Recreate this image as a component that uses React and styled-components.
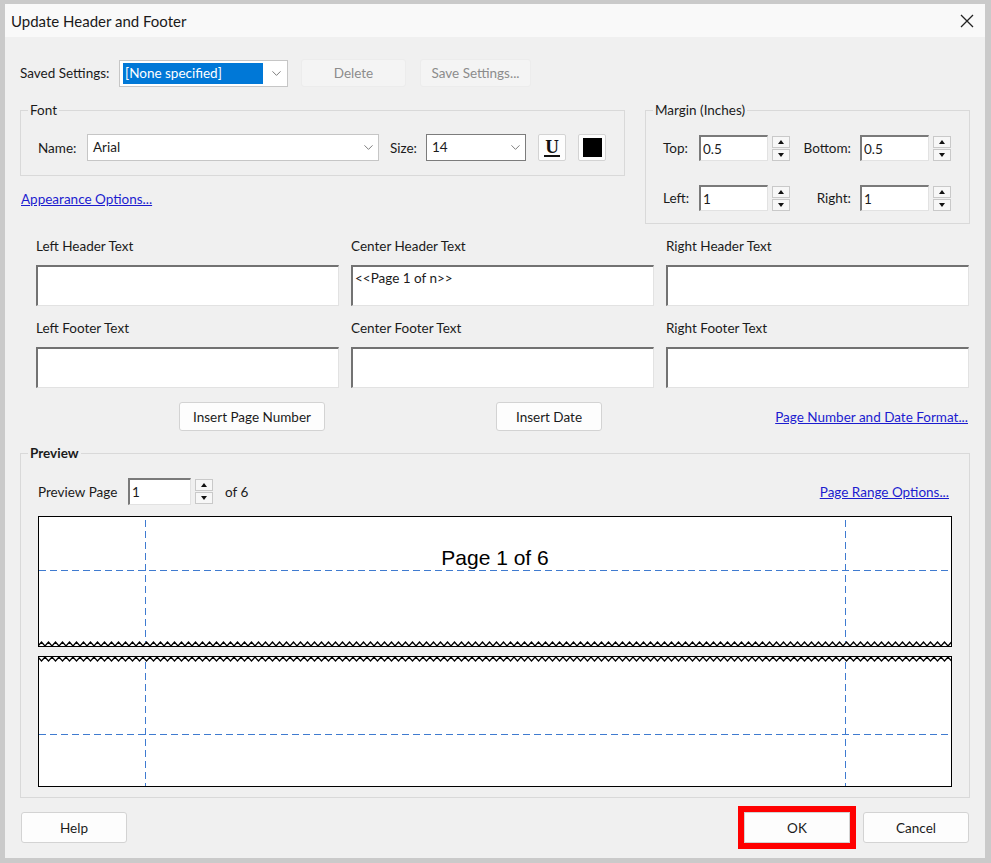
import React from "react";
import styled, { createGlobalStyle } from "styled-components";
import { ChevronDown } from "lucide-react";

const GlobalStyle = createGlobalStyle`
  html, body {
    margin: 0;
    padding: 0;
    background: #f0f0f0;
  }
  body {
    font-family: Lato, "Open Sans", sans-serif;
    font-size: 13.5px;
    color: #1b1b1b;
  }
  * {
    box-sizing: border-box;
  }
`;

const PAGE_W = 914;
const PAGE_H = 131;
const GUIDE = "#3f7bd0";

const zigzag = (base, tip) => {
  const pts = [];
  for (let x = 0; x <= PAGE_W; x += 7) {
    pts.push(`${x},${base}`);
    if (x + 3.5 <= PAGE_W) pts.push(`${x + 3.5},${tip}`);
  }
  return pts.join(" ");
};

const CloseIcon = () => (
  <svg width="14" height="14" viewBox="0 0 14 14">
    <path d="M1 1 L13 13 M13 1 L1 13" stroke="#222" strokeWidth="1.3" fill="none" />
  </svg>
);

const Spinner = () => (
  <SpinBox>
    <SpinButton>
      <Triangle $dir="up" />
    </SpinButton>
    <SpinButton>
      <Triangle $dir="down" />
    </SpinButton>
  </SpinBox>
);

const Dropdown = ({ width, value, highlight, focused, chevronRight }) => (
  <SelectBox $width={width} $focused={focused} $chevronRight={chevronRight}>
    <SelectValue $highlight={highlight}>{value}</SelectValue>
    <ChevronDown size={15} strokeWidth={1.4} color="#6a6a6a" />
  </SelectBox>
);

const MarginField = ({ label, labelWidth, lead, value }) => (
  <MarginCell $lead={lead}>
    <MarginLabel $width={labelWidth} $right={lead}>
      {label}
    </MarginLabel>
    <TextBox $width={69} $height={26} readOnly value={value} />
    <Spinner />
  </MarginCell>
);

const TextField = ({ label, value }) => (
  <FieldStack>
    <span>{label}</span>
    <TextArea readOnly value={value || ""} />
  </FieldStack>
);

const Guide = (props) => (
  <line
    stroke={GUIDE}
    strokeWidth="1"
    strokeDasharray="7 4"
    shapeRendering="crispEdges"
    fill="none"
    {...props}
  />
);

const PagePreview = ({ part }) => {
  const top = part === "top";
  const vTop = top ? 4 : 6;
  const vBottom = top ? PAGE_H - 5 : PAGE_H;
  const hY = top ? 54.5 : 78.5;
  return (
    <PageHalf>
      <PageLines viewBox={`0 0 ${PAGE_W} ${PAGE_H}`} width={PAGE_W} height={PAGE_H}>
        <Guide x1="107.5" y1={vTop} x2="107.5" y2={vBottom} />
        <Guide x1="807.5" y1={vTop} x2="807.5" y2={vBottom} />
        <Guide x1="1" y1={hY} x2={PAGE_W - 1} y2={hY} />
        <g stroke="#000" strokeWidth="1" fill="none">
          <line x1="0.5" y1="0" x2="0.5" y2={PAGE_H} />
          <line x1={PAGE_W - 0.5} y1="0" x2={PAGE_W - 0.5} y2={PAGE_H} />
          <line x1="0" y1="0.5" x2={PAGE_W} y2="0.5" />
          <line x1="0" y1={PAGE_H - 0.5} x2={PAGE_W} y2={PAGE_H - 0.5} />
          {top ? (
            <polyline strokeWidth="1.2" points={zigzag(PAGE_H - 1, PAGE_H - 5)} />
          ) : (
            <polyline strokeWidth="1.2" points={zigzag(1, 5)} />
          )}
        </g>
      </PageLines>
      {top && <PageText>Page 1 of 6</PageText>}
    </PageHalf>
  );
};

const App = () => {
  return (
    <>
      <GlobalStyle />
      <Window>
        <TitleBar>
          <Title>Update Header and Footer</Title>
          <CloseButton aria-label="Close">
            <CloseIcon />
          </CloseButton>
        </TitleBar>

        <Body>
          <SavedRow>
            <RowLabel $width={99}>Saved Settings:</RowLabel>
            <Dropdown width={169} value="[None specified]" highlight chevronRight={3} />
            <PushButton $width={105} $ml={13} disabled>
              Delete
            </PushButton>
            <PushButton $width={111} $ml={14} disabled>
              Save Settings...
            </PushButton>
          </SavedRow>

          <TopSection>
            <FontColumn>
              <GroupBox>
                <GroupTitle>Font</GroupTitle>
                <FontRow>
                  <RowLabel $width={49}>Name:</RowLabel>
                  <Dropdown width={292} value="Arial" />
                  <RowLabel $width={36} $ml={11}>
                    Size:
                  </RowLabel>
                  <Dropdown width={100} value="14" focused />
                  <SquareButton $ml={12} aria-label="Underline">
                    <UnderlineGlyph>U</UnderlineGlyph>
                  </SquareButton>
                  <SquareButton $ml={12} aria-label="Color">
                    <Swatch />
                  </SquareButton>
                </FontRow>
              </GroupBox>
              <LinkText $mt={14}>Appearance Options...</LinkText>
            </FontColumn>

            <MarginGroup>
              <GroupTitle>Margin (Inches)</GroupTitle>
              <MarginRow $mt={16}>
                <MarginField label="Top:" labelWidth={27} value="0.5" />
                <MarginField label="Bottom:" labelWidth={49} lead value="0.5" />
              </MarginRow>
              <MarginRow $mt={24}>
                <MarginField label="Left:" labelWidth={27} value="1" />
                <MarginField label="Right:" labelWidth={49} lead value="1" />
              </MarginRow>
            </MarginGroup>
          </TopSection>

          <TextGrid>
            <TextField label="Left Header Text" />
            <TextField label="Center Header Text" value="<<Page 1 of n>>" />
            <TextField label="Right Header Text" />
            <TextField label="Left Footer Text" />
            <TextField label="Center Footer Text" />
            <TextField label="Right Footer Text" />
          </TextGrid>

          <InsertRow>
            <PushButton $width={146} $height={29}>
              Insert Page Number
            </PushButton>
            <PushButton $width={106} $height={29} $ml={171}>
              Insert Date
            </PushButton>
            <LinkText $push>Page Number and Date Format...</LinkText>
          </InsertRow>

          <PreviewGroup>
            <GroupTitle $bold>Preview</GroupTitle>
            <PreviewHeader>
              <RowLabel $width={90}>Preview Page</RowLabel>
              <TextBox $width={63} $height={27} readOnly value="1" />
              <PreviewSpin>
                <Spinner />
              </PreviewSpin>
              <RowLabel $ml={12}>of 6</RowLabel>
              <LinkText $push>Page Range Options...</LinkText>
            </PreviewHeader>
            <Canvas>
              <PagePreview part="top" />
              <PagePreview part="bottom" />
            </Canvas>
          </PreviewGroup>

          <FooterRow>
            <PushButton $width={106} $height={31}>
              Help
            </PushButton>
            <FooterActions>
              <PushButton $width={106} $height={31} $primary>
                OK
              </PushButton>
              <PushButton $width={106} $height={31}>
                Cancel
              </PushButton>
            </FooterActions>
          </FooterRow>
        </Body>
      </Window>
    </>
  );
};

export default App;

const Window = styled.div`
  width: 991px;
  height: 863px;
  display: flex;
  flex-direction: column;
  background: #f0f0f0;
  border-style: solid;
  border-color: #cacaca;
  border-width: 4px 6px 5px 5px;
  overflow: hidden;
`;

const TitleBar = styled.div`
  height: 33px;
  flex-shrink: 0;
  display: flex;
  align-items: center;
  justify-content: space-between;
  padding: 0 11px 0 6px;
  background: #f9f9f9;
`;

const Title = styled.span`
  font-size: 15px;
  color: #1a1a1a;
`;

const CloseButton = styled.button`
  display: flex;
  align-items: center;
  justify-content: center;
  padding: 0;
  border: none;
  background: transparent;
  cursor: pointer;
`;

const Body = styled.div`
  display: flex;
  flex-direction: column;
  padding: 0 15px;
`;

const SavedRow = styled.div`
  display: flex;
  align-items: center;
  height: 28px;
  margin-top: 22px;
`;

const RowLabel = styled.span`
  flex-shrink: 0;
  width: ${(p) => (p.$width ? `${p.$width}px` : "auto")};
  margin-left: ${(p) => p.$ml || 0}px;
  white-space: nowrap;
`;

const SelectBox = styled.div`
  width: ${(p) => p.$width}px;
  height: 27px;
  flex-shrink: 0;
  display: flex;
  align-items: center;
  gap: 6px;
  padding: 0 ${(p) => p.$chevronRight ?? 2}px 0 3px;
  background: #fff;
  border: 1px solid ${(p) => (p.$focused ? "#7c7c7c" : "#c6c6c6")};
`;

const SelectValue = styled.span`
  flex: 1;
  height: 21px;
  line-height: 21px;
  padding: 0 2px;
  white-space: nowrap;
  overflow: hidden;
  background: ${(p) => (p.$highlight ? "#0078d7" : "transparent")};
  color: ${(p) => (p.$highlight ? "#fff" : "#1b1b1b")};
`;

const PushButton = styled.button`
  width: ${(p) => p.$width}px;
  height: ${(p) => p.$height || 28}px;
  margin-left: ${(p) => p.$ml || 0}px;
  flex-shrink: 0;
  padding: 0;
  font-family: inherit;
  font-size: 13.5px;
  color: #1b1b1b;
  background: #fdfdfd;
  border: 1px solid #d3d3d3;
  border-radius: ${(p) => (p.$primary ? 0 : 3)}px;
  outline: ${(p) => (p.$primary ? "6px solid #ff0000" : "none")};

  &:disabled {
    color: #8c8c8c;
    background: #f4f4f4;
    border-color: #ececec;
  }
`;

const TopSection = styled.div`
  display: flex;
  gap: 20px;
  margin-top: 14px;
`;

const FontColumn = styled.div`
  width: 605px;
  display: flex;
  flex-direction: column;
  align-items: flex-start;
`;

const GroupBox = styled.div`
  width: 100%;
  display: flex;
  flex-direction: column;
  margin-top: 9px;
  padding: 0 19px 14px 17px;
  border: 1px solid #d9d9d9;
`;

const GroupTitle = styled.span`
  align-self: flex-start;
  margin: -10px 0 0 -10px;
  padding: 0 2px;
  line-height: 18px;
  background: #f0f0f0;
  font-weight: ${(p) => (p.$bold ? 700 : 400)};
`;

const FontRow = styled.div`
  display: flex;
  align-items: center;
  margin-top: 15px;
`;

const SquareButton = styled.button`
  width: 28px;
  height: 27px;
  margin-left: ${(p) => p.$ml || 0}px;
  flex-shrink: 0;
  display: flex;
  align-items: center;
  justify-content: center;
  padding: 0;
  background: #fdfdfd;
  border: 1px solid #d3d3d3;
  border-radius: 2px;
`;

const UnderlineGlyph = styled.span`
  font-family: "Liberation Serif", serif;
  font-weight: 700;
  font-size: 19px;
  line-height: 17px;
  color: #111;
  border-bottom: 2px solid #111;
  padding: 0 1px;
`;

const Swatch = styled.span`
  width: 19px;
  height: 19px;
  background: #000;
`;

const LinkText = styled.a`
  color: #1c1ccf;
  text-decoration: underline;
  line-height: 18px;
  white-space: nowrap;
  cursor: pointer;
  margin-top: ${(p) => p.$mt || 0}px;
  margin-left: ${(p) => (p.$push ? "auto" : "1px")};
`;

const MarginGroup = styled(GroupBox)`
  width: 325px;
  padding: 0 0 12px 17px;
`;

const MarginRow = styled.div`
  display: flex;
  align-items: center;
  margin-top: ${(p) => p.$mt}px;
`;

const MarginCell = styled.div`
  display: flex;
  align-items: center;
  margin-left: ${(p) => (p.$lead ? 12 : 0)}px;
`;

const MarginLabel = styled.span`
  width: ${(p) => p.$width}px;
  margin-right: 9px;
  text-align: ${(p) => (p.$right ? "right" : "left")};
`;

const TextBox = styled.input`
  width: ${(p) => p.$width}px;
  height: ${(p) => p.$height}px;
  flex-shrink: 0;
  padding: 0 2px;
  font-family: inherit;
  font-size: 13.5px;
  color: #1b1b1b;
  background: #fff;
  border-style: solid;
  border-width: 2px 1px 1px 2px;
  border-color: #7a7a7a #e2e2e2 #e2e2e2 #7a7a7a;
  outline: none;
`;

const SpinBox = styled.div`
  width: 18px;
  height: 25px;
  margin-left: 4px;
  flex-shrink: 0;
  display: flex;
  flex-direction: column;
  gap: 1px;
`;

const SpinButton = styled.div`
  flex: 1;
  display: flex;
  align-items: center;
  justify-content: center;
  background: #f7f7f7;
  border: 1px solid #c9c9c9;
`;

const Triangle = styled.span`
  width: 0;
  height: 0;
  border-left: 3.5px solid transparent;
  border-right: 3.5px solid transparent;
  ${(p) =>
    p.$dir === "up"
      ? "border-bottom: 4px solid #111;"
      : "border-top: 4px solid #111;"}
`;

const TextGrid = styled.div`
  display: grid;
  grid-template-columns: repeat(3, 303px);
  column-gap: 12px;
  row-gap: 13px;
  margin-top: 13px;
  padding-left: 16px;
`;

const FieldStack = styled.div`
  display: flex;
  flex-direction: column;
  gap: 10px;
  line-height: 18px;
`;

const TextArea = styled.textarea`
  width: 303px;
  height: 41px;
  resize: none;
  padding: 2px 2px;
  font-family: inherit;
  font-size: 13.5px;
  line-height: 18px;
  color: #1b1b1b;
  background: #fff;
  border-style: solid;
  border-width: 2px 1px 1px 2px;
  border-color: #727272 #e2e2e2 #e2e2e2 #727272;
  outline: none;
`;

const InsertRow = styled.div`
  display: flex;
  align-items: center;
  margin-top: 14px;
  padding: 0 2px 0 159px;
`;

const PreviewGroup = styled(GroupBox)`
  margin-top: 22px;
  padding: 0 19px 10px 17px;
`;

const PreviewHeader = styled.div`
  display: flex;
  align-items: center;
  margin-top: 16px;
  padding-right: 1px;
`;

const PreviewSpin = styled.div`
  display: flex;
`;

const Canvas = styled.div`
  display: flex;
  flex-direction: column;
  gap: 9px;
  margin-top: 11px;
`;

const PageHalf = styled.div`
  position: relative;
  width: ${PAGE_W}px;
  height: ${PAGE_H}px;
  background: #fff;
`;

const PageLines = styled.svg`
  position: absolute;
  inset: 0;
  display: block;
`;

const PageText = styled.div`
  position: relative;
  padding-top: 30px;
  text-align: center;
  font-family: "Liberation Sans", Arial, sans-serif;
  font-size: 21px;
  line-height: 24px;
  color: #000;
`;

const FooterRow = styled.div`
  display: flex;
  justify-content: space-between;
  align-items: center;
  margin-top: 14px;
  padding: 0 1px;
`;

const FooterActions = styled.div`
  display: flex;
  gap: 13px;
`;
